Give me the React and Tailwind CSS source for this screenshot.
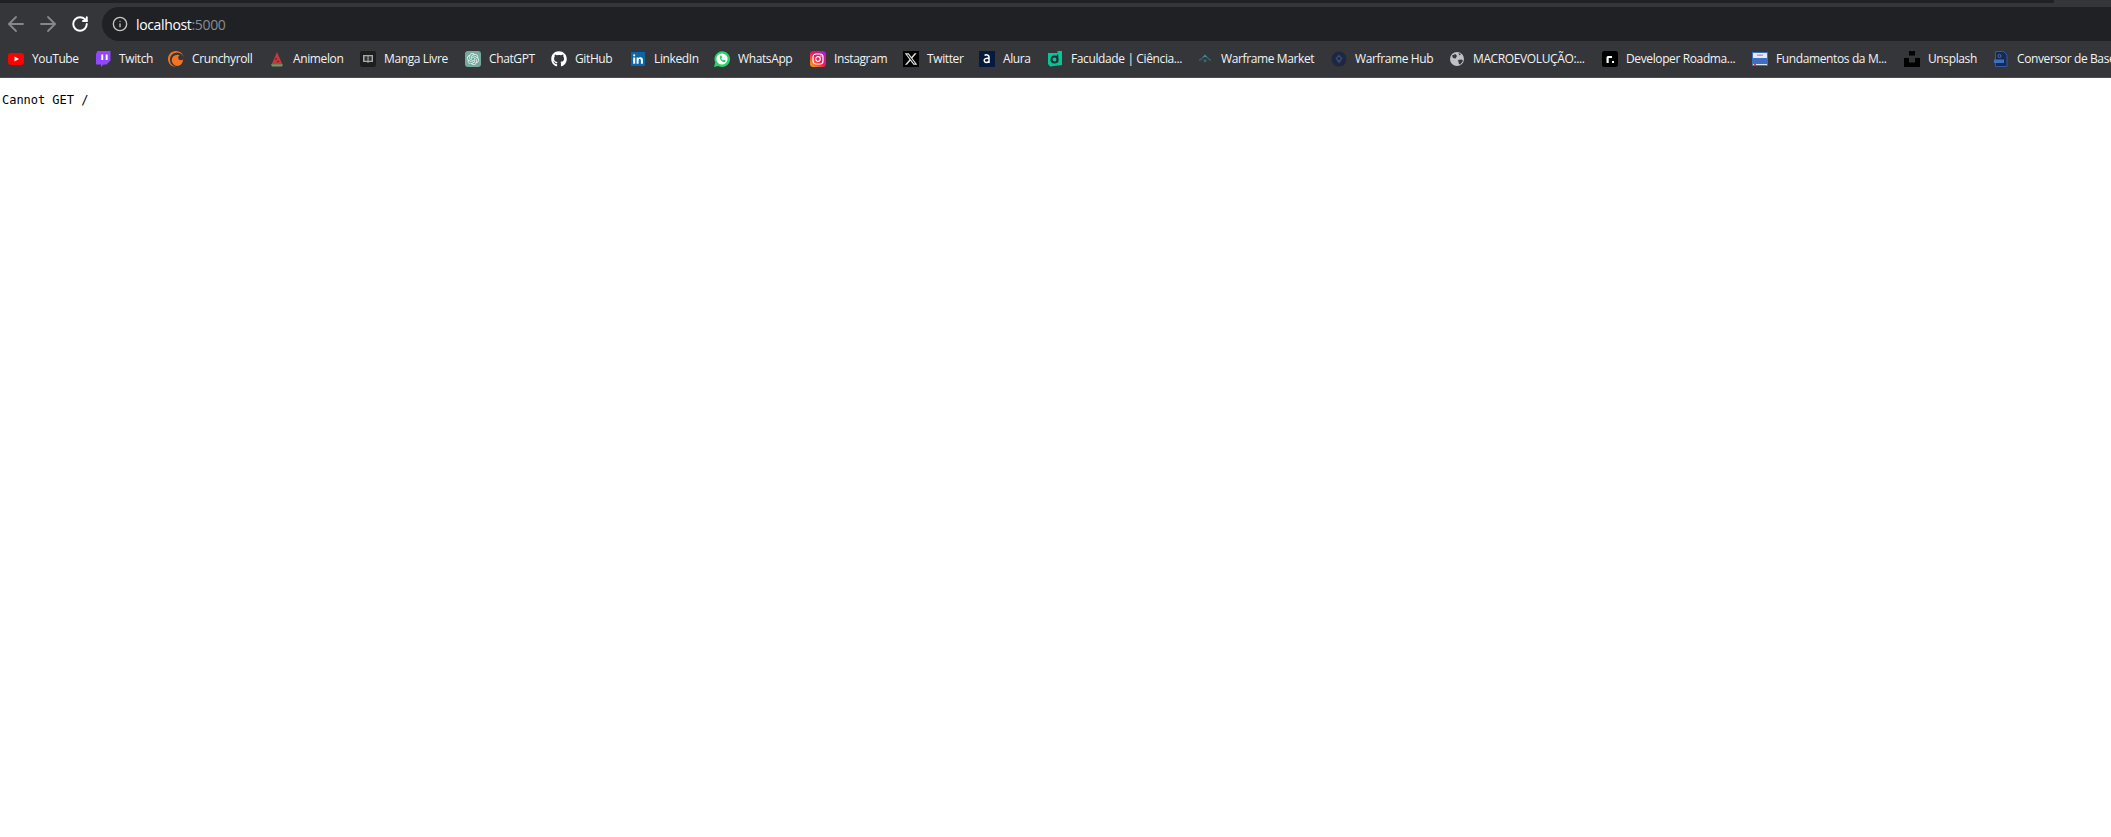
import React from 'react';
import { ArrowLeft, ArrowRight, RotateCw, Info } from 'lucide-react';
import { FaGithub, FaXTwitter } from 'react-icons/fa6';
import { SiCrunchyroll, SiOpenai } from 'react-icons/si';

const YouTube = () => (
  <svg viewBox="0 0 16 16" className="w-4 h-4">
    <rect x="0" y="2" width="16" height="12" rx="3" fill="#f00" />
    <path d="M6.5 5.4 11 8l-4.500 2.600z" fill="#fff" />
  </svg>
);

const Twitch = () => (
  <svg viewBox="0 0 16 16" className="w-4 h-4">
    <path d="M2.500 0H15.500v9.500L11.500 13.500H8.500L6 16V13.500H1V3z" fill="#9146ff" />
    <path d="M6.300 3.500h1.900v5.500H6.300zM10.700 3.500h1.900v5.500h-1.900z" fill="#fff" />
  </svg>
);

const Animelon = () => (
  <svg viewBox="0 0 16 16" className="w-4 h-4">
    <path d="M8 1 13.500 13.500H2.500z" fill="#c23a3e" />
    <path d="M2 13.300h12L13 15.400H3z" fill="#6f9a64" />
    <circle cx="7" cy="8" r=".8" fill="#4a1517" />
    <circle cx="9" cy="10.500" r=".8" fill="#4a1517" />
  </svg>
);

const MangaLivre = () => (
  <svg viewBox="0 0 16 16" className="w-4 h-4">
    <rect width="16" height="16" rx="2" fill="#1e1e1f" />
    <path d="M3 4h10v7H9l-1 1-1-1H3z" fill="#a9a9a9" />
    <path d="M4.500 5.200h3v4.600h-3zM8.600 5.200h3v4.600h-3z" fill="#333" />
  </svg>
);

const ChatGpt = () => (
  <div className="w-4 h-4 rounded-[3px] bg-[#74aa9c] flex items-center justify-center">
    <SiOpenai className="w-3 h-3 text-[#e8f3f0]" />
  </div>
);

const LinkedIn = () => (
  <svg viewBox="0 0 16 16" className="w-4 h-4">
    <rect x="1" y="1" width="14" height="14" fill="#0a66a8" />
    <path d="M3.200 6.400h2v6.400h-2zM3.100 4.300a1.100 1.100 0 1 1 2.200 0 1.100 1.100 0 0 1-2.200 0zM6.600 6.400h1.900v.9c.4-.6 1-1.100 2-1.100 1.900 0 2.400 1.200 2.400 3v3.600h-2V9.600c0-.8-.2-1.600-1.100-1.600s-1.200.7-1.200 1.600v3.200h-2z" fill="#fff" />
  </svg>
);

const WhatsApp = () => (
  <svg viewBox="0 0 16 16" className="w-4 h-4">
    <path d="M0 16 1.200 11.500A7.800 7.800 0 1 1 4.400 14.900z" fill="#25d366" />
    <circle cx="8" cy="8" r="5.600" fill="#fff" />
    <path d="M6 4.800 7.400 4.500 8 6.800 7.200 7.600C7.600 8.500 8.200 9 9 9.300L9.800 8.500 11.600 9.600 11 11C8.300 11.600 5 8.500 6 4.800z" fill="#25d366" />
  </svg>
);

const Instagram = () => (
  <svg viewBox="0 0 16 16" className="w-4 h-4">
    <defs>
      <linearGradient id="ig" x1="0" y1="1" x2="1" y2="0">
        <stop offset="0" stopColor="#fdb400" />
        <stop offset="0.5" stopColor="#f0145a" />
        <stop offset="1" stopColor="#a020e0" />
      </linearGradient>
    </defs>
    <rect width="16" height="16" rx="3.500" fill="url(#ig)" />
    <rect x="3" y="3" width="10" height="10" rx="3" fill="none" stroke="#fff" strokeWidth="1.200" />
    <circle cx="8" cy="8" r="2.300" fill="none" stroke="#fff" strokeWidth="1.200" />
    <circle cx="11" cy="5" r=".7" fill="#fff" />
  </svg>
);

const Twitter = () => (
  <div className="w-4 h-4 bg-black flex items-center justify-center">
    <FaXTwitter className="w-3.5 h-3.5 text-[#e0e0e0]" />
  </div>
);

const Alura = () => (
  <svg viewBox="0 0 16 16" className="w-4 h-4">
    <rect width="16" height="16" fill="#051a3d" />
    <path d="M5.500 4.300c1-.6 4.500-1 4.500 1.500v6.200M10 7.300c-3-.5-4.800.4-4.800 2.300 0 2.300 3.200 2.400 4.800.6" fill="none" stroke="#fff" strokeWidth="1.500" />
  </svg>
);

const Faculdade = () => (
  <svg viewBox="0 0 16 16" className="w-4 h-4">
    <path d="M1 2h9.500V0H15v14l-12 1.500L1 13z" fill="#00c896" />
    <circle cx="7.500" cy="8.500" r="3" fill="none" stroke="#2b2c30" strokeWidth="2" />
    <path d="M10.500 3.500v8" stroke="#2b2c30" strokeWidth="1.500" />
  </svg>
);

const WarframeMarket = () => (
  <svg viewBox="0 0 16 16" className="w-4 h-4">
    <path d="M8 3.500 11.500 7 8 6 4.500 7z" fill="#3f8a96" />
    <path d="M1.500 9 5 6.800 5.800 8 3 9.300 5 11zM14.500 9 11 6.800 10.200 8 13 9.300 11 11z" fill="#2f6e79" />
    <circle cx="8" cy="9.800" r="1.500" fill="#2f6e79" />
  </svg>
);

const WarframeHub = () => (
  <svg viewBox="0 0 16 16" className="w-4 h-4">
    <circle cx="8" cy="8" r="7.500" fill="#1d2740" />
    <path d="M8 3.500 11.500 7.500 8 12.500 4.500 7.500z" fill="#394a78" />
    <circle cx="8" cy="7.500" r="1.500" fill="#1d2740" />
  </svg>
);

const Globe = () => (
  <svg viewBox="0 0 16 16" className="w-4 h-4">
    <circle cx="8" cy="8" r="7" fill="#bdc1c6" />
    <path d="M3 4.500 6.500 3 8 5 6.500 7.500 4 7zM9 9l4-.5 1 1.500-3 3.500-1-.5zM9.500 2l2.500 1-1.500 1.500z" fill="#35363a" />
  </svg>
);

const Roadmap = () => (
  <svg viewBox="0 0 16 16" className="w-4 h-4">
    <rect width="16" height="16" rx="2.500" fill="#000" />
    <path d="M4.500 12V6.500Q4.500 5 6 5h4v2H6.700v5z" fill="#fff" />
    <rect x="10" y="10" width="2" height="2" fill="#fff" />
  </svg>
);

const Fundamentos = () => (
  <svg viewBox="0 0 16 16" className="w-4 h-4">
    <rect y="1" width="16" height="14" fill="#3f6ec0" />
    <rect x="1" y="2" width="14" height="5" fill="#e6e9ee" />
    <rect x="5" y="3.500" width="6" height="1.500" fill="#8db0d8" />
    <rect x="1" y="13" width="14" height="1" fill="#dfe5ef" />
    <rect x="2" y="13" width="2" height="1" fill="#d93a3a" />
  </svg>
);

const Unsplash = () => (
  <svg viewBox="0 0 16 16" className="w-4 h-4">
    <path d="M5 0h6v4.500H5zM0 7h5v4.500h6V7h5v9H0z" fill="#000" />
  </svg>
);

const Conversor = () => (
  <svg viewBox="0 0 16 16" className="w-4 h-4">
    <path d="M2.500.5h8l3.500 3.500v11.500H2.500z" fill="#1b2a4c" stroke="#2d5aa6" />
    <circle cx="6.500" cy="5" r="1.500" fill="none" stroke="#3f70c0" />
    <rect x="1" y="8.500" width="10" height="3.500" fill="#3f70c0" />
  </svg>
);

const bookmarks = [
  { label: 'YouTube', icon: <YouTube />, width: 'w-[47px]' },
  { label: 'Twitch', icon: <Twitch />, width: 'w-[33px]' },
  { label: 'Crunchyroll', icon: <SiCrunchyroll className="w-4 h-4 text-[#f47521]" />, width: 'w-[61px]' },
  { label: 'Animelon', icon: <Animelon />, width: 'w-[51px]' },
  { label: 'Manga Livre', icon: <MangaLivre />, width: 'w-[65px]' },
  { label: 'ChatGPT', icon: <ChatGpt />, width: 'w-[46px]' },
  { label: 'GitHub', icon: <FaGithub className="w-4 h-4 text-white" />, width: 'w-[39px]' },
  { label: 'LinkedIn', icon: <LinkedIn />, width: 'w-[44px]' },
  { label: 'WhatsApp', icon: <WhatsApp />, width: 'w-[56px]' },
  { label: 'Instagram', icon: <Instagram />, width: 'w-[53px]' },
  { label: 'Twitter', icon: <Twitter />, width: 'w-[36px]' },
  { label: 'Alura', icon: <Alura />, width: 'w-[28px]' },
  { label: 'Faculdade | Ciência...', icon: <Faculdade />, width: 'w-[110px]' },
  { label: 'Warframe Market', icon: <WarframeMarket />, width: 'w-[94px]' },
  { label: 'Warframe Hub', icon: <WarframeHub />, width: 'w-[78px]' },
  { label: 'MACROEVOLUÇÃO:...', icon: <Globe />, width: 'w-[113px]' },
  { label: 'Developer Roadma...', icon: <Roadmap />, width: 'w-[110px]' },
  { label: 'Fundamentos da M...', icon: <Fundamentos />, width: 'w-[112px]' },
  { label: 'Unsplash', icon: <Unsplash />, width: 'w-[49px]' },
  { label: 'Conversor de Bases', icon: <Conversor />, width: 'w-[125px]' },
];

export default function App() {
  return (
    <div className="min-h-screen bg-white overflow-hidden font-['Open_Sans',sans-serif]">
      {/* tira das abas */}
      <div className="h-[3px] bg-[#35363a]">
        <div className="h-full w-[2054px] bg-[#202124]" />
      </div>

      {/* barra de navegacao */}
      <div className="h-[38px] bg-[#35363a] flex items-end">
        <div className="h-[34px] w-[102px] flex items-center gap-[8px] pl-[4px] shrink-0">
          <ArrowLeft className="w-6 h-6 text-[#85878a]" strokeWidth={1.8} />
          <ArrowRight className="w-6 h-6 text-[#85878a]" strokeWidth={1.8} />
          <div className="w-6 h-6 flex items-center justify-center">
            <RotateCw className="w-[18px] h-[18px] text-white" strokeWidth={2.6} />
          </div>
        </div>
        <div className="h-[34px] flex-1 bg-[#202124] rounded-l-[17px] flex items-center pl-[10px]">
          <Info className="w-4 h-4 text-[#c4c7c5]" strokeWidth={2} />
          <span className="ml-[8px] text-[14px] tracking-[-0.35px] text-white">
            localhost<span className="text-[#8a8d91]">:5000</span>
          </span>
        </div>
      </div>

      {/* favoritos */}
      <div className="h-[37px] bg-[#35363a] border-b border-[#4a4b4f] flex items-center pl-[8px] whitespace-nowrap overflow-hidden">
        {bookmarks.map((b) => (
          <div key={b.label} className="flex items-center gap-[8px] shrink-0 mr-[16px]">
            <div className="w-4 h-4 shrink-0">{b.icon}</div>
            <span className={`${b.width} text-[12px] tracking-[-0.38px] text-[#f1f3f4]`}>{b.label}</span>
          </div>
        ))}
      </div>

      <pre className="mt-[14px] pl-[2px] font-['DejaVu_Sans_Mono',monospace] text-[12px] tracking-[-0.03px] leading-[16px] text-black">Cannot GET /</pre>
    </div>
  );
}
